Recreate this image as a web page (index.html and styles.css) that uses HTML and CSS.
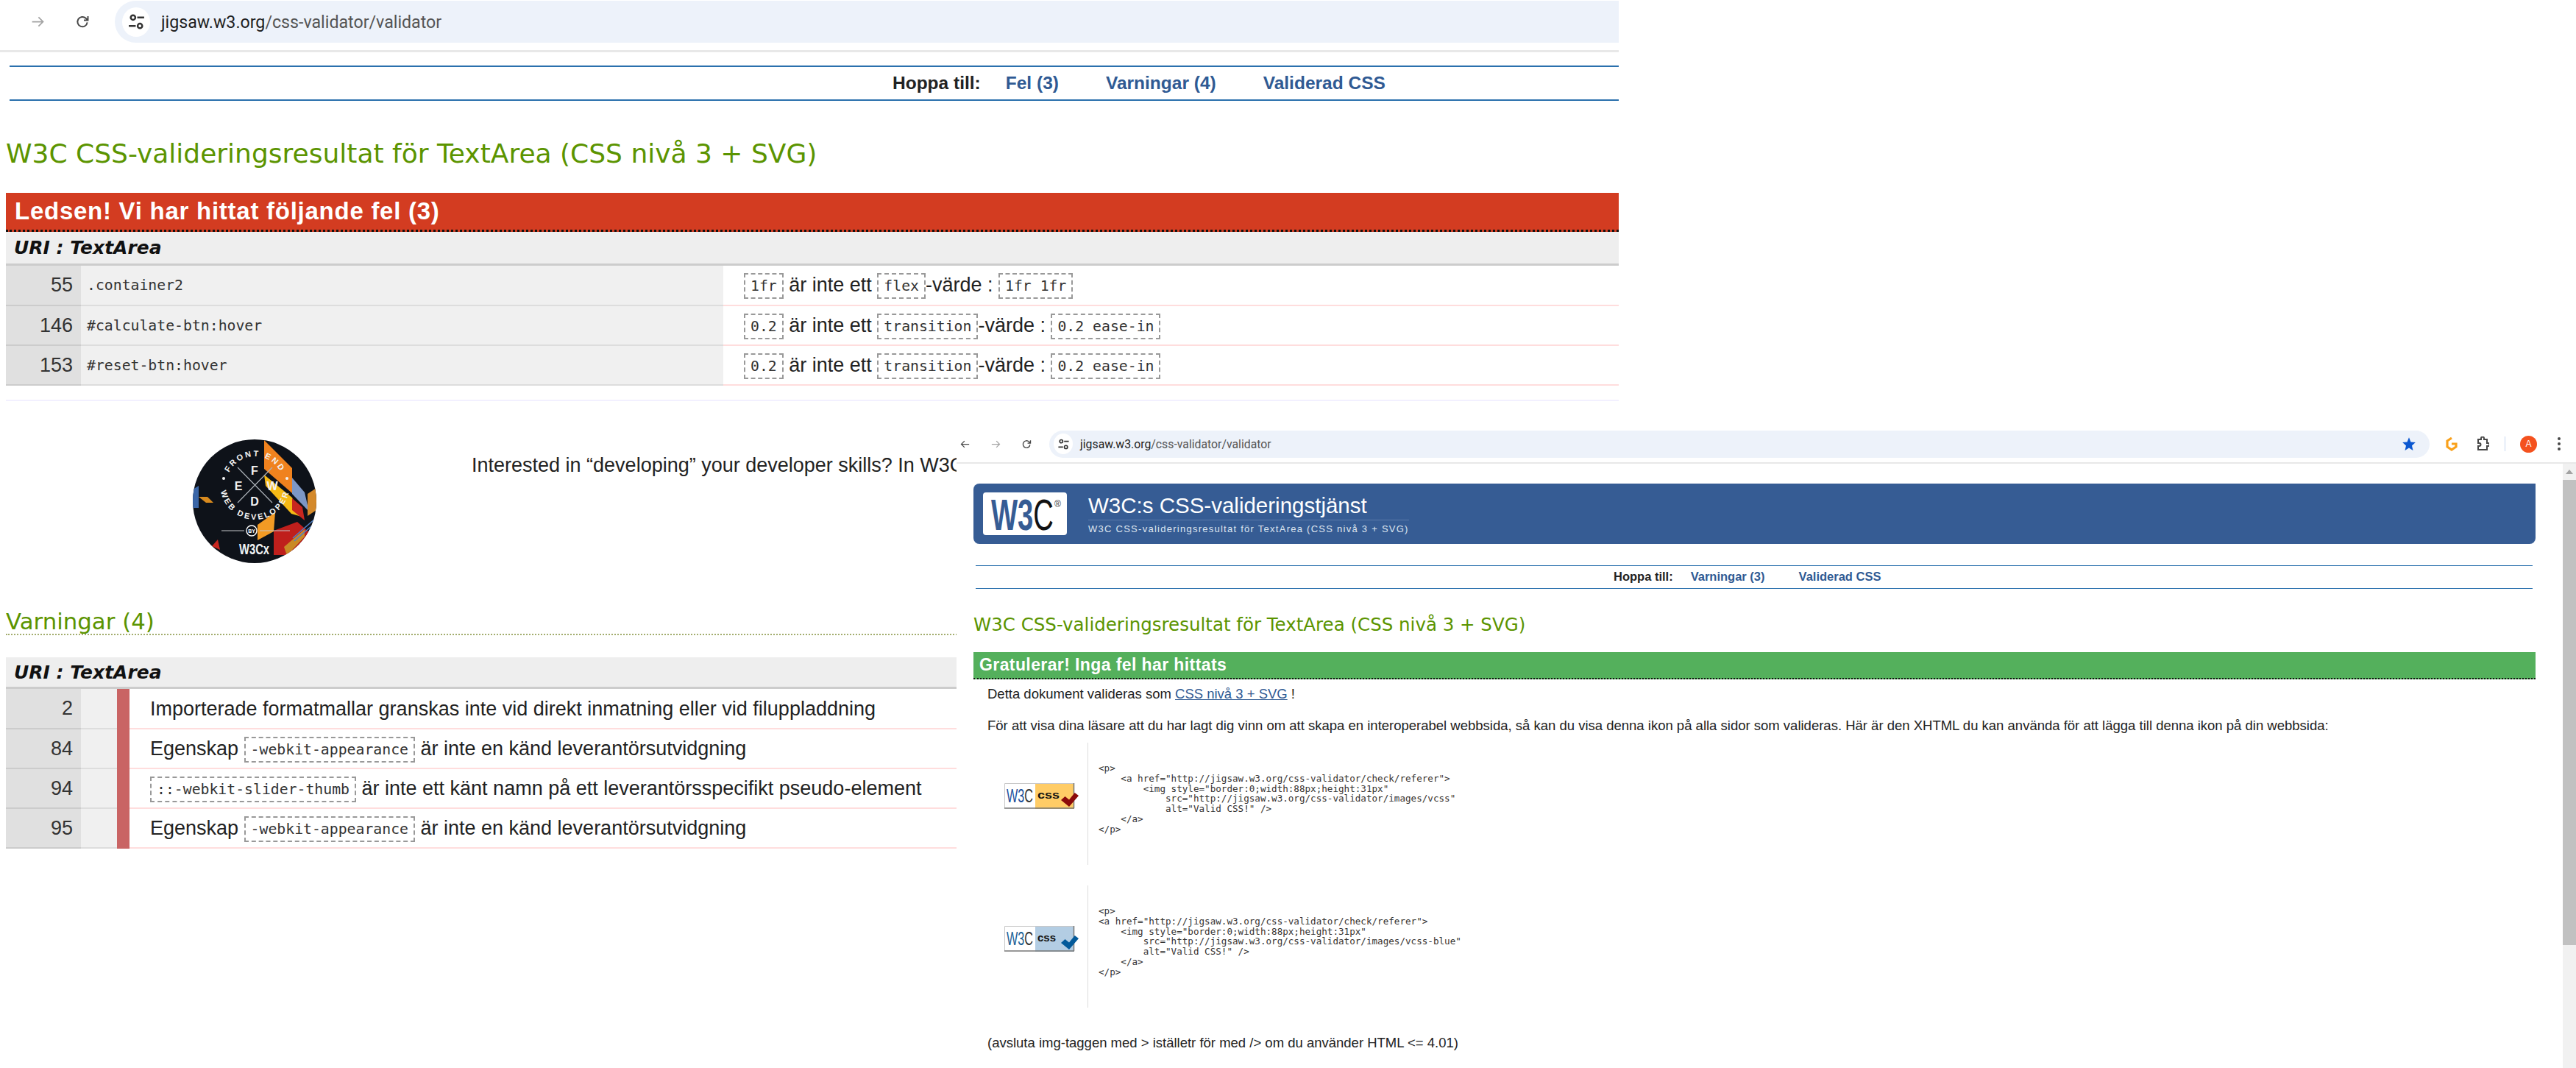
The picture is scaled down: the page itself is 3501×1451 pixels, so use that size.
FILE: index.html
```html
<!DOCTYPE html>
<html lang="sv">
<head>
    <meta charset="UTF-8">
    <title>W3C CSS-valideringsresultat</title>
    <link rel="stylesheet" href="styles.css">
</head>
<body>
    <svg class="defs" width="0" height="0">
        <symbol id="i-back" viewBox="0 0 24 24"><path d="M21 12H4M11 5l-7 7 7 7" fill="none" stroke="currentColor" stroke-width="2"/></symbol>
        <symbol id="i-forward" viewBox="0 0 24 24"><path d="M3 12h17M13 5l7 7-7 7" fill="none" stroke="currentColor" stroke-width="2"/></symbol>
        <symbol id="i-reload" viewBox="0 0 24 24"><path d="M19 13a7.6 7.6 0 1 1-2.3-6.4L20 9.6M20 3.5v6.3h-6.3" fill="none" stroke="currentColor" stroke-width="2.2"/></symbol>
        <symbol id="i-tune" viewBox="0 0 24 24"><g fill="none" stroke="currentColor" stroke-width="2.4"><circle cx="7.5" cy="6.5" r="3"/><circle cx="16.5" cy="17.5" r="3"/><path d="M13 6.5h9M2 17.5h9"/></g></symbol>
    </svg>

    <!-- back window -->
    <div class="window win-back">
        <div class="toolbar">
            <svg class="tool tool-back"><use href="#i-back"/></svg>
            <svg class="tool tool-fwd"><use href="#i-forward"/></svg>
            <svg class="tool"><use href="#i-reload"/></svg>
            <div class="address">
                <span class="site-info"><svg><use href="#i-tune"/></svg></span>
                <span class="url"><b>jigsaw.w3.org</b>/css-validator/validator</span>
            </div>
        </div>

        <div class="page">
            <div class="jump">
                <strong>Hoppa till:</strong>
                <a class="jump-first" href="#fel">Fel (3)</a>
                <a href="#varn">Varningar (4)</a>
                <a href="#ok">Validerad CSS</a>
            </div>

            <h2 class="result-title">W3C CSS-valideringsresultat för TextArea (CSS nivå 3 + SVG)</h2>

            <h3 class="bar bar-error" id="fel">Ledsen! Vi har hittat följande fel (3)</h3>
            <div class="uri">URI : TextArea</div>
            <table class="results">
                <tr>
                    <td class="line">55</td>
                    <td class="selector">.container2</td>
                    <td class="msg"><code>1fr</code> är inte ett <code>flex</code>-värde : <code>1fr 1fr</code></td>
                </tr>
                <tr>
                    <td class="line">146</td>
                    <td class="selector">#calculate-btn:hover</td>
                    <td class="msg"><code>0.2</code> är inte ett <code>transition</code>-värde : <code>0.2 ease-in</code></td>
                </tr>
                <tr>
                    <td class="line">153</td>
                    <td class="selector">#reset-btn:hover</td>
                    <td class="msg"><code>0.2</code> är inte ett <code>transition</code>-värde : <code>0.2 ease-in</code></td>
                </tr>
            </table>
            <div class="rule"></div>

            <div class="promo">
                <svg class="fewd" viewBox="0 0 168 168">
                    <defs>
                        <clipPath id="fewd-clip"><circle cx="84" cy="84" r="84"/></clipPath>
                        <path id="arc-top" d="M45.500 62a39 39 0 0 1 78 0"/>
                        <path id="arc-bottom" d="M37.500 62a47 47 0 0 0 94 0"/>
                    </defs>
                    <g clip-path="url(#fewd-clip)">
                        <rect width="168" height="168" fill="#0e1219"/>
                        <path d="M0 68l8-5v30H0z" fill="#3a66a8"/>
                        <path d="M8 78h12l8 8H18z" fill="#d88a1e"/>
                        <path d="M97 1l38 38v34L97 40z" fill="#f0821e"/>
                        <path d="M97 48l38 31 13 26-14-4-35-38z" fill="#f5b915"/>
                        <path d="M135 52l17 20 6 26-23-24z" fill="#7d97c5"/>
                        <path d="M135 80l14 12 3 18-17-14z" fill="#c8261f"/>
                        <path d="M156 74l12-8v30l-12 8z" fill="#d4892a"/>
                        <path d="M110 124l32-12 16 14-18 31h-30z" fill="#bf1f1c"/>
                        <path d="M88 116l24-17-2 26-22 12z" fill="#f29a24"/>
                        <path d="M124 146l28-24v10l-24 26z" fill="#c98a26"/>
                        <path d="M136 134l30-26M138 138l30-26" stroke="#4f7fc5" stroke-width="1.600"/>
                        <path d="M26 145l8-9 3 14z" fill="#c8261f"/>
                        <path d="M61 38l47 48M108 38L61 86" stroke="#aab0b6" stroke-width="1.200"/>
                        <g class="fewd-big" text-anchor="middle">
                            <text x="84" y="48">F</text>
                            <text x="62" y="69">E</text>
                            <text x="108" y="69">W</text>
                            <text x="84" y="90">D</text>
                        </g>
                        <text class="fewd-arc" text-anchor="middle"><textPath href="#arc-top" startOffset="50%">FRONT END</textPath></text>
                        <text class="fewd-arc" text-anchor="middle"><textPath href="#arc-bottom" startOffset="50%">WEB DEVELOPER</textPath></text>
                        <circle cx="42" cy="53" r="2" fill="#f2f2f2"/>
                        <circle cx="128" cy="53" r="2" fill="#f2f2f2"/>
                        <path d="M39 124h31M91 124h41" stroke="#c5c8cc" stroke-width="1.200"/>
                        <circle cx="80" cy="124" r="7" fill="none" stroke="#fff" stroke-width="1.400"/>
                        <text class="fewd-by" x="80" y="127" text-anchor="middle">BY</text>
                        <text class="fewd-w3cx" x="63" y="156" textLength="41" lengthAdjust="spacingAndGlyphs">W3Cx</text>
                    </g>
                </svg>
                <p class="promo-text">Interested in “developing” your developer skills? In W3Cx</p>
            </div>

            <h3 class="section-title" id="varn">Varningar (4)</h3>
            <div class="uri uri-warn">URI : TextArea</div>
            <table class="results warnings">
                <tr>
                    <td class="line">2</td>
                    <td class="gap"></td>
                    <td class="level"></td>
                    <td class="msg">Importerade formatmallar granskas inte vid direkt inmatning eller vid filuppladdning</td>
                </tr>
                <tr>
                    <td class="line">84</td>
                    <td class="gap"></td>
                    <td class="level"></td>
                    <td class="msg">Egenskap <code>-webkit-appearance</code> är inte en känd leverantörsutvidgning</td>
                </tr>
                <tr>
                    <td class="line">94</td>
                    <td class="gap"></td>
                    <td class="level"></td>
                    <td class="msg"><code>::-webkit-slider-thumb</code> är inte ett känt namn på ett leverantörsspecifikt pseudo-element</td>
                </tr>
                <tr>
                    <td class="line">95</td>
                    <td class="gap"></td>
                    <td class="level"></td>
                    <td class="msg">Egenskap <code>-webkit-appearance</code> är inte en känd leverantörsutvidgning</td>
                </tr>
            </table>
        </div>
    </div>

    <!-- front window -->
    <div class="window win-front">
        <div class="toolbar">
            <svg class="tool"><use href="#i-back"/></svg>
            <svg class="tool tool-fwd"><use href="#i-forward"/></svg>
            <svg class="tool"><use href="#i-reload"/></svg>
            <div class="address">
                <span class="site-info"><svg><use href="#i-tune"/></svg></span>
                <span class="url"><b>jigsaw.w3.org</b>/css-validator/validator</span>
                <svg class="star" viewBox="0 0 24 24"><path d="M12 1.500l3 7.600 7.600.6-5.800 5.200 1.800 7.900L12 18.500l-6.600 4.300 1.800-7.900-5.800-5.200 7.600-.6z" fill="#0b57d0"/></svg>
            </div>
            <svg class="ext-g" viewBox="0 0 18 20"><path d="M9 2L3 6v8l6 4 6-4V10H9" fill="none" stroke="#f9a11b" stroke-width="3.200"/></svg>
            <svg class="ext-puzzle" viewBox="0 0 18 20"><path d="M3 4h4V2.500a2 2 0 0 1 4 0V4h4v5h1.500a2 2 0 0 1 0 4H15v5H3v-5h1.500a1.800 1.800 0 0 0 0-4H3z" fill="none" stroke="#474747" stroke-width="2"/></svg>
            <span class="tool-sep"></span>
            <span class="avatar">A</span>
            <span class="kebab"><i></i><i></i><i></i></span>
        </div>

        <div class="front-body">
            <div class="page">
                <div class="banner">
                    <svg class="w3c-logo" viewBox="0 0 114 58">
                        <text class="w3c-mark" x="11" y="51" textLength="85" lengthAdjust="spacingAndGlyphs">W3<tspan class="w3c-c">C</tspan></text>
                        <text class="w3c-reg" x="97" y="20">®</text>
                    </svg>
                    <div class="banner-text">
                        <h1>W3C:s CSS-valideringstjänst</h1>
                        <p>W3C CSS-valideringsresultat för TextArea (CSS nivå 3 + SVG)</p>
                    </div>
                </div>

                <div class="jump">
                    <strong>Hoppa till:</strong>
                    <a class="jump-first" href="#varn2">Varningar (3)</a>
                    <a href="#ok">Validerad CSS</a>
                </div>

                <h2 class="result-title">W3C CSS-valideringsresultat för TextArea (CSS nivå 3 + SVG)</h2>

                <h3 class="bar bar-ok" id="ok">Gratulerar! Inga fel har hittats</h3>
                <p class="para para-first">Detta dokument valideras som <a href="#css">CSS nivå 3 + SVG</a> !</p>
                <p class="para">För att visa dina läsare att du har lagt dig vinn om att skapa en interoperabel webbsida, så kan du visa denna ikon på alla sidor som valideras. Här är den XHTML du kan använda för att lägga till denna ikon på din webbsida:</p>

                <div class="snippet">
                    <svg class="badge" viewBox="0 0 102 35">
                        <rect width="42" height="35" fill="#fff"/>
                        <rect x="42" width="53" height="35" fill="#fc6"/>
                        <path d="M.500 34V.500H94.500" fill="none" stroke="#c8c8c8"/>
                        <path d="M0 34h95M94.500 0v34" fill="none" stroke="#777" stroke-width="1.500"/>
                        <text class="badge-w3" x="3" y="26" textLength="36" lengthAdjust="spacingAndGlyphs" fill="#1b4f9c">W3<tspan class="badge-c">C</tspan></text>
                        <text class="badge-css" x="45" y="21" textLength="30" lengthAdjust="spacingAndGlyphs">css</text>
                        <path d="M77 23l5.500-5 5.500 4.500 7.700-9.500 5.300 4-13 15z" fill="#8b0a0a"/>
                    </svg>
                    <pre class="snippet-code">&lt;p&gt;
    &lt;a href="http://jigsaw.w3.org/css-validator/check/referer"&gt;
        &lt;img style="border:0;width:88px;height:31px"
            src="http://jigsaw.w3.org/css-validator/images/vcss"
            alt="Valid CSS!" /&gt;
    &lt;/a&gt;
&lt;/p&gt;</pre>
                </div>

                <div class="snippet snippet-next">
                    <svg class="badge" viewBox="0 0 102 35">
                        <rect width="42" height="35" fill="#fff"/>
                        <rect x="42" width="53" height="35" fill="#b3cde3"/>
                        <path d="M.500 34V.500H94.500" fill="none" stroke="#c8c8c8"/>
                        <path d="M0 34h95M94.500 0v34" fill="none" stroke="#777" stroke-width="1.500"/>
                        <text class="badge-w3" x="3" y="26" textLength="36" lengthAdjust="spacingAndGlyphs" fill="#1b5f95">W3<tspan class="badge-c">C</tspan></text>
                        <text class="badge-css" x="45" y="21" textLength="25" lengthAdjust="spacingAndGlyphs">css</text>
                        <path d="M77 23l5.500-5 5.500 4.500 7.700-9.500 5.300 4-13 15z" fill="#035a9a"/>
                    </svg>
                    <pre class="snippet-code">&lt;p&gt;
&lt;a href="http://jigsaw.w3.org/css-validator/check/referer"&gt;
    &lt;img style="border:0;width:88px;height:31px"
        src="http://jigsaw.w3.org/css-validator/images/vcss-blue"
        alt="Valid CSS!" /&gt;
    &lt;/a&gt;
&lt;/p&gt;</pre>
                </div>

                <p class="para para-last">(avsluta img-taggen med &gt; iställetr för med /&gt; om du använder HTML &lt;= 4.01)</p>
            </div>

            <div class="scrollbar">
                <span class="scroll-up"></span>
                <span class="scroll-thumb"></span>
            </div>
        </div>
    </div>
</body>
</html>
```

FILE: styles.css
```css
html, body {
    margin: 0;
    padding: 0;
}
body {
    position: relative;
    width: 3501px;
    height: 1451px;
    overflow: hidden;
    background: #fff;
    font-family: "Liberation Sans", Arial, sans-serif;
    color: #222;
}
.defs {
    position: absolute;
}

/* the two browser windows sit on a free canvas */
.window {
    position: absolute;
    overflow: hidden;
    background: #fff;
}
.win-back {
    left: 0;
    top: 0;
    width: 2200px;
    height: 1451px;
}
.win-front {
    left: 1300px;
    top: 572px;
    width: 2201px;
    height: 879px;
}

/* toolbar */
.toolbar {
    display: flex;
    align-items: center;
    box-sizing: border-box;
    border-bottom: 3px solid #e8e8e8;
}
.tool {
    flex: none;
    color: #474747;
}
.tool-fwd {
    color: #a3a3a3;
}
.address {
    display: flex;
    align-items: center;
    flex: 1;
    box-sizing: border-box;
    background: #edf2fa;
}
.site-info {
    display: flex;
    align-items: center;
    justify-content: center;
    flex: none;
    border-radius: 50%;
    background: #fff;
    color: #333;
}
.url {
    font-family: Roboto, sans-serif;
    color: #555;
    white-space: nowrap;
}
.url b {
    font-weight: 400;
    color: #1f1f1f;
}

.win-back .toolbar {
    height: 71px;
    padding: 2px 0 11px;
}
.win-back .tool {
    width: 21px;
    height: 21px;
    margin-right: 40px;
}
.win-back .tool-back {
    margin-left: -20px;
}
.win-back .tool:nth-child(3) {
    margin-right: 33px;
}
.win-back .address {
    height: 57px;
    padding-left: 10px;
    border-radius: 29px 0 0 29px;
}
.win-back .site-info {
    width: 38px;
    height: 40px;
    margin-right: 15px;
}
.win-back .site-info svg {
    width: 25px;
    height: 25px;
}
.win-back .url {
    font-size: 23.200px;
}

.win-front .toolbar {
    height: 58px;
    padding: 12px 0 6px;
    border-bottom-width: 2px;
}
.win-front .tool {
    width: 15px;
    height: 15px;
    margin-right: 27px;
}
.win-front .tool:first-child {
    margin-left: 4px;
}
.win-front .tool:nth-child(3) {
    margin-right: 23px;
}
.win-front .address {
    flex: none;
    width: 1876px;
    height: 37px;
    padding-left: 6px;
    border-radius: 19px;
}
.win-front .site-info {
    width: 26px;
    height: 28px;
    margin-right: 10px;
}
.win-front .site-info svg {
    width: 17px;
    height: 17px;
}
.win-front .url {
    font-size: 15.800px;
}
.star {
    width: 20px;
    height: 20px;
    margin-left: auto;
    margin-right: 18px;
}
.ext-g {
    width: 18px;
    height: 20px;
    margin-left: 21px;
}
.ext-puzzle {
    width: 18px;
    height: 20px;
    margin-left: 24px;
}
.tool-sep {
    width: 1px;
    height: 20px;
    margin-left: 21px;
    background: #c7d7f0;
}
.avatar {
    width: 23px;
    height: 23px;
    margin-left: 20px;
    border-radius: 50%;
    background: #f4511e;
    color: #fff;
    font-size: 12px;
    line-height: 23px;
    text-align: center;
}
.kebab {
    display: flex;
    flex-direction: column;
    gap: 3px;
    margin-left: 28px;
}
.kebab i {
    width: 4px;
    height: 4px;
    border-radius: 50%;
    background: #474747;
}

/* page content */
.win-back .page {
    padding-left: 8px;
}
.jump {
    display: flex;
    box-sizing: border-box;
    border-top: 2px solid #2a70ad;
    border-bottom: 2px solid #2a70ad;
    font-weight: bold;
    white-space: nowrap;
}
.jump a {
    color: #2f5a93;
    text-decoration: none;
}
.win-back .jump {
    height: 48px;
    margin: 18px 0 0 5px;
    padding-left: 1200px;
    gap: 64px;
    font-size: 24.500px;
    line-height: 44px;
}
.win-back .jump-first {
    margin-left: -30px;
}
.result-title {
    margin: 0;
    font-family: "DejaVu Sans", Verdana, sans-serif;
    font-weight: 400;
    color: #5b9400;
    white-space: nowrap;
}
.win-back .result-title {
    margin-top: 48px;
    font-size: 36px;
    line-height: 48px;
}
.bar {
    margin: 0;
    box-sizing: border-box;
    border-bottom: 3px dotted #111;
    color: #fff;
    font-weight: bold;
}
.bar-error {
    height: 53px;
    margin-top: 29px;
    padding-left: 12px;
    background: #d33c21;
    font-size: 33px;
    line-height: 50px;
    letter-spacing: .740px;
}
.uri {
    box-sizing: border-box;
    height: 46px;
    padding-left: 11px;
    border-bottom: 3px solid #ccc;
    background: #eee;
    color: #111;
    font-family: "DejaVu Sans", Verdana, sans-serif;
    font-size: 25px;
    font-weight: bold;
    font-style: italic;
    line-height: 44px;
}
.uri-warn {
    height: 43px;
    margin-top: 30px;
    line-height: 41px;
}

.results {
    width: 100%;
    border-collapse: collapse;
    table-layout: fixed;
    font-size: 27px;
}
.results td {
    box-sizing: border-box;
    height: 54px;
    padding: 0;
    border-bottom: 2px solid #fdd;
    white-space: nowrap;
}
.results .line {
    width: 102px;
    padding-right: 11px;
    background: #e0e0e0;
    border-bottom-color: #ccc;
    text-align: right;
    color: #333;
}
.results .selector {
    width: 873px;
    padding-left: 8px;
    background: #f0f0f0;
    border-bottom-color: #ddd;
    font-family: "DejaVu Sans Mono", monospace;
    font-size: 19.800px;
    color: #333;
}
.results .msg {
    padding-left: 28px;
    padding-top: 2px;
}
.results code {
    display: inline-block;
    padding: 1px 7px;
    border: 2px dashed #999;
    font-family: "DejaVu Sans Mono", monospace;
    font-size: 19.800px;
    line-height: 29px;
    vertical-align: middle;
    color: #333;
}
.warnings .gap {
    width: 49px;
    background: #f0f0f0;
    border-bottom-color: #ddd;
}
.warnings .level {
    width: 17px;
    background: #c96464;
    border-bottom-color: #c96464;
}
.rule {
    height: 2px;
    margin-top: 19px;
    background: #f2f0ff;
}

.promo {
    display: flex;
    align-items: flex-start;
    margin-top: 52px;
}
.fewd {
    width: 168px;
    height: 168px;
    margin-left: 254px;
}
.fewd-big {
    fill: #f2f2f2;
    font-family: "Liberation Sans", sans-serif;
    font-size: 16px;
    font-weight: bold;
}
.fewd-arc {
    fill: #f2f2f2;
    font-family: "Liberation Sans", sans-serif;
    font-size: 11px;
    font-weight: bold;
    letter-spacing: 2.600px;
}
.fewd-by {
    fill: #fff;
    font-family: "Liberation Sans", sans-serif;
    font-size: 7px;
    font-weight: bold;
}
.fewd-w3cx {
    fill: #f2f2f2;
    font-family: "Liberation Sans", sans-serif;
    font-size: 21px;
    font-weight: bold;
}
.promo-text {
    margin: 20px 0 0 211px;
    font-size: 27px;
    line-height: 30px;
    white-space: nowrap;
}
.section-title {
    box-sizing: border-box;
    height: 36px;
    margin: 62px 0 0;
    border-bottom: 2px dotted #a3ad6e;
    color: #5b9400;
    font-family: "DejaVu Sans", Verdana, sans-serif;
    font-size: 30.800px;
    font-weight: 400;
    line-height: 34px;
}

/* front window body */
.front-body {
    display: flex;
}
.win-front .page {
    flex: 1;
    min-width: 0;
    padding: 27px 37px 0 23px;
}
.banner {
    display: flex;
    box-sizing: border-box;
    height: 82px;
    padding: 12px 13px;
    border-radius: 8px 0 8px 8px;
    background: #365c94;
    color: #fff;
}
.w3c-logo {
    width: 114px;
    height: 58px;
    margin-right: 29px;
    border-radius: 4px;
    background: #fff;
    overflow: visible;
}
.w3c-mark {
    fill: #365c94;
    font-family: "Liberation Sans", sans-serif;
    font-size: 60px;
    font-weight: bold;
}
.w3c-c {
    fill: #111;
    font-weight: 400;
}
.w3c-reg {
    fill: #333;
    font-family: "Liberation Sans", sans-serif;
    font-size: 12px;
}
.banner h1 {
    margin: 0;
    padding-bottom: 1px;
    border-bottom: 1px solid #5c7bab;
    font-size: 29.500px;
    font-weight: 400;
    line-height: 36px;
}
.banner p {
    margin: 3px 0 0;
    color: #dfe6f0;
    font-size: 13px;
    line-height: 18px;
    letter-spacing: 1.260px;
}
.win-front .jump {
    height: 32px;
    margin: 29px 4px 0 3px;
    padding-left: 867px;
    gap: 46px;
    border-width: 1.500px 0;
    font-size: 16.500px;
    line-height: 29px;
}
.win-front .jump-first {
    margin-left: -22px;
}
.win-front .result-title {
    margin-top: 32px;
    font-size: 24.500px;
    line-height: 34px;
}
.bar-ok {
    height: 37px;
    margin-top: 20px;
    padding-left: 8px;
    border-bottom-width: 2px;
    background: #54b05c;
    font-size: 23px;
    line-height: 35px;
    letter-spacing: .4px;
}
.para {
    margin: 19px 0 0 19px;
    font-size: 18.500px;
    line-height: 24px;
    white-space: nowrap;
}
.para a {
    color: #2f5a93;
}
.para-first {
    margin-top: 8px;
}
.snippet {
    display: flex;
    align-items: flex-start;
    height: 166px;
    margin: 11px 0 0 19px;
}
.snippet-next {
    margin-top: 28px;
}
.badge {
    flex: none;
    width: 102px;
    height: 35px;
    margin: 55px 11px 0 23px;
    overflow: visible;
}
.badge-w3 {
    font-family: "Liberation Sans", sans-serif;
    font-size: 25px;
}
.badge-c {
    fill: #333;
}
.badge-css {
    font-family: "Liberation Sans", sans-serif;
    font-size: 15px;
    font-weight: bold;
    fill: #111;
}
.snippet-code {
    align-self: stretch;
    margin: 0;
    padding: 28px 0 0 14px;
    border-left: 1.500px solid #ddd;
    font-family: "DejaVu Sans Mono", monospace;
    font-size: 12.600px;
    line-height: 13.800px;
    color: #333;
}
.para-last {
    margin-top: 36px;
}
.scrollbar {
    display: flex;
    flex-direction: column;
    flex: none;
    width: 18px;
    height: 821px;
    background: #f1f1f1;
}
.scroll-up {
    flex: none;
    width: 0;
    height: 0;
    margin: 8px auto 8px;
    border: 5px solid transparent;
    border-top: 0;
    border-bottom: 6px solid #a3a3a3;
}
.scroll-thumb {
    flex: none;
    height: 632px;
    background: #c1c1c1;
}
```
